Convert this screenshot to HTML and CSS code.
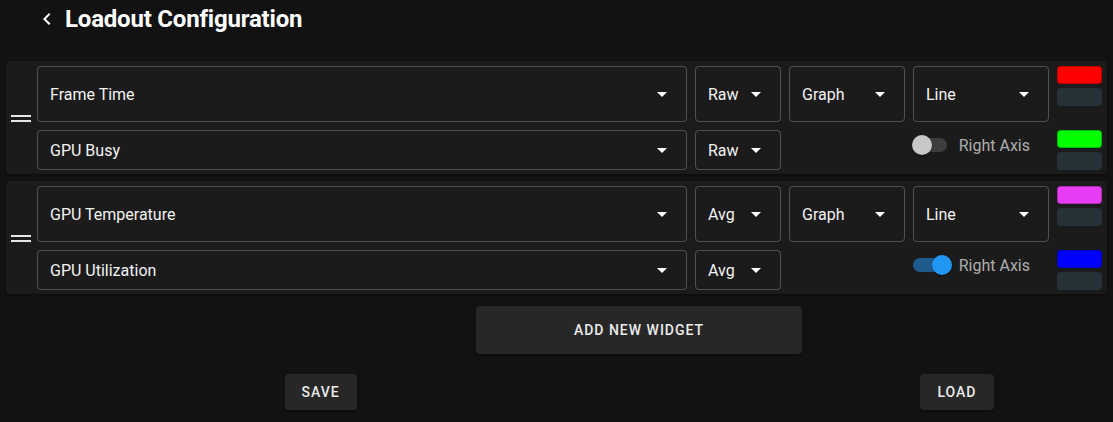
FILE: index.html
```html
<!DOCTYPE html>
<html lang="en">
<head>
<meta charset="utf-8">
<title>Loadout Configuration</title>
<link rel="stylesheet" href="styles.css">
</head>
<body>
<header class="header">
  <svg class="back" viewBox="0 0 24 24" aria-hidden="true"><path d="M15.41 7.41 14 6l-6 6 6 6 1.41-1.41L10.83 12z"/></svg>
  <h1 class="title">Loadout Configuration</h1>
</header>

<main class="widgets">
  <section class="card">
    <div class="handle"><span></span><span></span></div>
    <div class="rows">
      <div class="row">
        <div class="select tall metric"><span>Frame Time</span><svg class="caret" viewBox="0 0 24 24"><path d="M7 10l5 5 5-5z"/></svg></div>
        <div class="select tall agg"><span>Raw</span><svg class="caret" viewBox="0 0 24 24"><path d="M7 10l5 5 5-5z"/></svg></div>
        <div class="select tall kind"><span>Graph</span><svg class="caret" viewBox="0 0 24 24"><path d="M7 10l5 5 5-5z"/></svg></div>
        <div class="select tall style"><span>Line</span><svg class="caret" viewBox="0 0 24 24"><path d="M7 10l5 5 5-5z"/></svg></div>
        <div class="swatches"><span class="swatch red"></span><span class="swatch slate"></span></div>
      </div>
      <div class="row">
        <div class="select small metric"><span>GPU Busy</span><svg class="caret" viewBox="0 0 24 24"><path d="M7 10l5 5 5-5z"/></svg></div>
        <div class="select small agg"><span>Raw</span><svg class="caret" viewBox="0 0 24 24"><path d="M7 10l5 5 5-5z"/></svg></div>
        <div class="axis">
          <label class="toggle">
            <span class="track"><span class="thumb"></span></span>
            <span class="label">Right Axis</span>
          </label>
        </div>
        <div class="swatches"><span class="swatch green"></span><span class="swatch slate"></span></div>
      </div>
    </div>
  </section>

  <section class="card">
    <div class="handle"><span></span><span></span></div>
    <div class="rows">
      <div class="row">
        <div class="select tall metric"><span>GPU Temperature</span><svg class="caret" viewBox="0 0 24 24"><path d="M7 10l5 5 5-5z"/></svg></div>
        <div class="select tall agg"><span>Avg</span><svg class="caret" viewBox="0 0 24 24"><path d="M7 10l5 5 5-5z"/></svg></div>
        <div class="select tall kind"><span>Graph</span><svg class="caret" viewBox="0 0 24 24"><path d="M7 10l5 5 5-5z"/></svg></div>
        <div class="select tall style"><span>Line</span><svg class="caret" viewBox="0 0 24 24"><path d="M7 10l5 5 5-5z"/></svg></div>
        <div class="swatches"><span class="swatch magenta"></span><span class="swatch slate"></span></div>
      </div>
      <div class="row">
        <div class="select small metric"><span>GPU Utilization</span><svg class="caret" viewBox="0 0 24 24"><path d="M7 10l5 5 5-5z"/></svg></div>
        <div class="select small agg"><span>Avg</span><svg class="caret" viewBox="0 0 24 24"><path d="M7 10l5 5 5-5z"/></svg></div>
        <div class="axis">
          <label class="toggle on">
            <span class="track"><span class="thumb"></span></span>
            <span class="label">Right Axis</span>
          </label>
        </div>
        <div class="swatches"><span class="swatch blue"></span><span class="swatch slate"></span></div>
      </div>
    </div>
  </section>
</main>

<footer class="footer">
  <button class="btn wide">Add New Widget</button>
  <div class="saveload">
    <button class="btn">Save</button>
    <button class="btn">Load</button>
  </div>
</footer>
</body>
</html>
```

FILE: styles.css
```css
* { box-sizing: border-box; }

html, body {
  margin: 0;
  background: #121212;
  color: #fff;
  font-family: Roboto, "Liberation Sans", Arial, sans-serif;
}

body {
  width: 1113px;
  height: 422px;
  overflow: hidden;
}

.header {
  display: flex;
  align-items: center;
  height: 38px;
  padding-left: 35px;
  margin-bottom: 23px;
}

.back {
  width: 24px;
  height: 24px;
  fill: #fff;
  flex: none;
}

.title {
  margin: 0 0 0 6px;
  font-size: 24px;
  font-weight: 700;
  line-height: 32px;
  letter-spacing: -0.2px;
  color: #fff;
}

.widgets {
  display: flex;
  flex-direction: column;
  gap: 7px;
  padding: 0 6px;
}

.card {
  display: flex;
  align-items: center;
  background: #1b1b1b;
  border-radius: 4px;
  padding: 5px 5px 4px 5px;
  box-shadow: 0 1px 2px rgba(0,0,0,0.35);
}

.handle {
  width: 20px;
  margin-right: 6px;
  display: flex;
  flex-direction: column;
  gap: 3px;
  flex: none;
}
.handle span {
  display: block;
  height: 2px;
  background: #e6e6e6;
}

.rows {
  flex: 1;
  display: flex;
  flex-direction: column;
  gap: 8px;
}

.row {
  display: flex;
  gap: 8px;
  align-items: flex-start;
}

.select {
  display: flex;
  align-items: center;
  justify-content: space-between;
  border: 1px solid rgba(255,255,255,0.23);
  border-radius: 4px;
  padding: 0 12px 0 12px;
  font-size: 16px;
  color: #f2f2f2;
  flex: none;
}
.select.tall { height: 56px; }
.select.small { height: 40px; }
.select.metric { flex: 1; }
.select.agg { width: 86px; }
.select.kind { width: 116px; }
.select.style { width: 136px; }

.caret {
  width: 24px;
  height: 24px;
  fill: #fff;
  flex: none;
}

.swatches {
  width: 45px;
  display: flex;
  flex-direction: column;
  gap: 4px;
  flex: none;
}
.swatch {
  display: block;
  height: 18px;
  border-radius: 4px;
}
.swatch.red { background: #ff0000; box-shadow: inset 0 0 0 1px rgba(0,0,0,0.25); }
.swatch.green { background: #00ff00; box-shadow: inset 0 0 0 1px rgba(0,0,0,0.25); }
.swatch.magenta { background: #e83cf4; box-shadow: inset 0 0 0 1px rgba(0,0,0,0.25); }
.swatch.blue { background: #0000ff; box-shadow: inset 0 0 0 1px rgba(0,0,0,0.25); }
.swatch.slate { background: #263238; }

.axis {
  width: 260px;
  height: 30px;
  display: flex;
  align-items: center;
  justify-content: flex-end;
  padding-right: 19px;
  flex: none;
}

.toggle {
  display: flex;
  align-items: center;
}

.track {
  position: relative;
  width: 34px;
  height: 14px;
  border-radius: 7px;
  background: #3d3d3d;
  margin-right: 12px;
}
.thumb {
  position: absolute;
  top: -3px;
  left: -1px;
  width: 20px;
  height: 20px;
  border-radius: 50%;
  background: #c8c8c8;
  box-shadow: 0 2px 1px -1px rgba(0,0,0,0.2), 0 1px 1px rgba(0,0,0,0.14), 0 1px 3px rgba(0,0,0,0.12);
}
.toggle.on .track { background: #1f5a8c; }
.toggle.on .thumb { left: 19px; background: #2196f3; }

.label {
  font-size: 16px;
  color: rgba(255,255,255,0.65);
}

.footer {
  display: flex;
  flex-direction: column;
  align-items: center;
  padding-left: 165px;
  margin-top: 12px;
}

.btn {
  font-family: Roboto, "Liberation Sans", Arial, sans-serif;
  font-size: 14px;
  font-weight: 500;
  letter-spacing: 1px;
  text-transform: uppercase;
  color: #ececec;
  background: #272727;
  border: none;
  border-radius: 4px;
  height: 36px;
  padding: 0 17px;
  box-shadow: 0 2px 3px rgba(0,0,0,0.3);
}
.btn.wide {
  width: 326px;
  height: 48px;
}

.saveload {
  width: 709px;
  display: flex;
  justify-content: space-between;
  margin-top: 20px;
}
```
